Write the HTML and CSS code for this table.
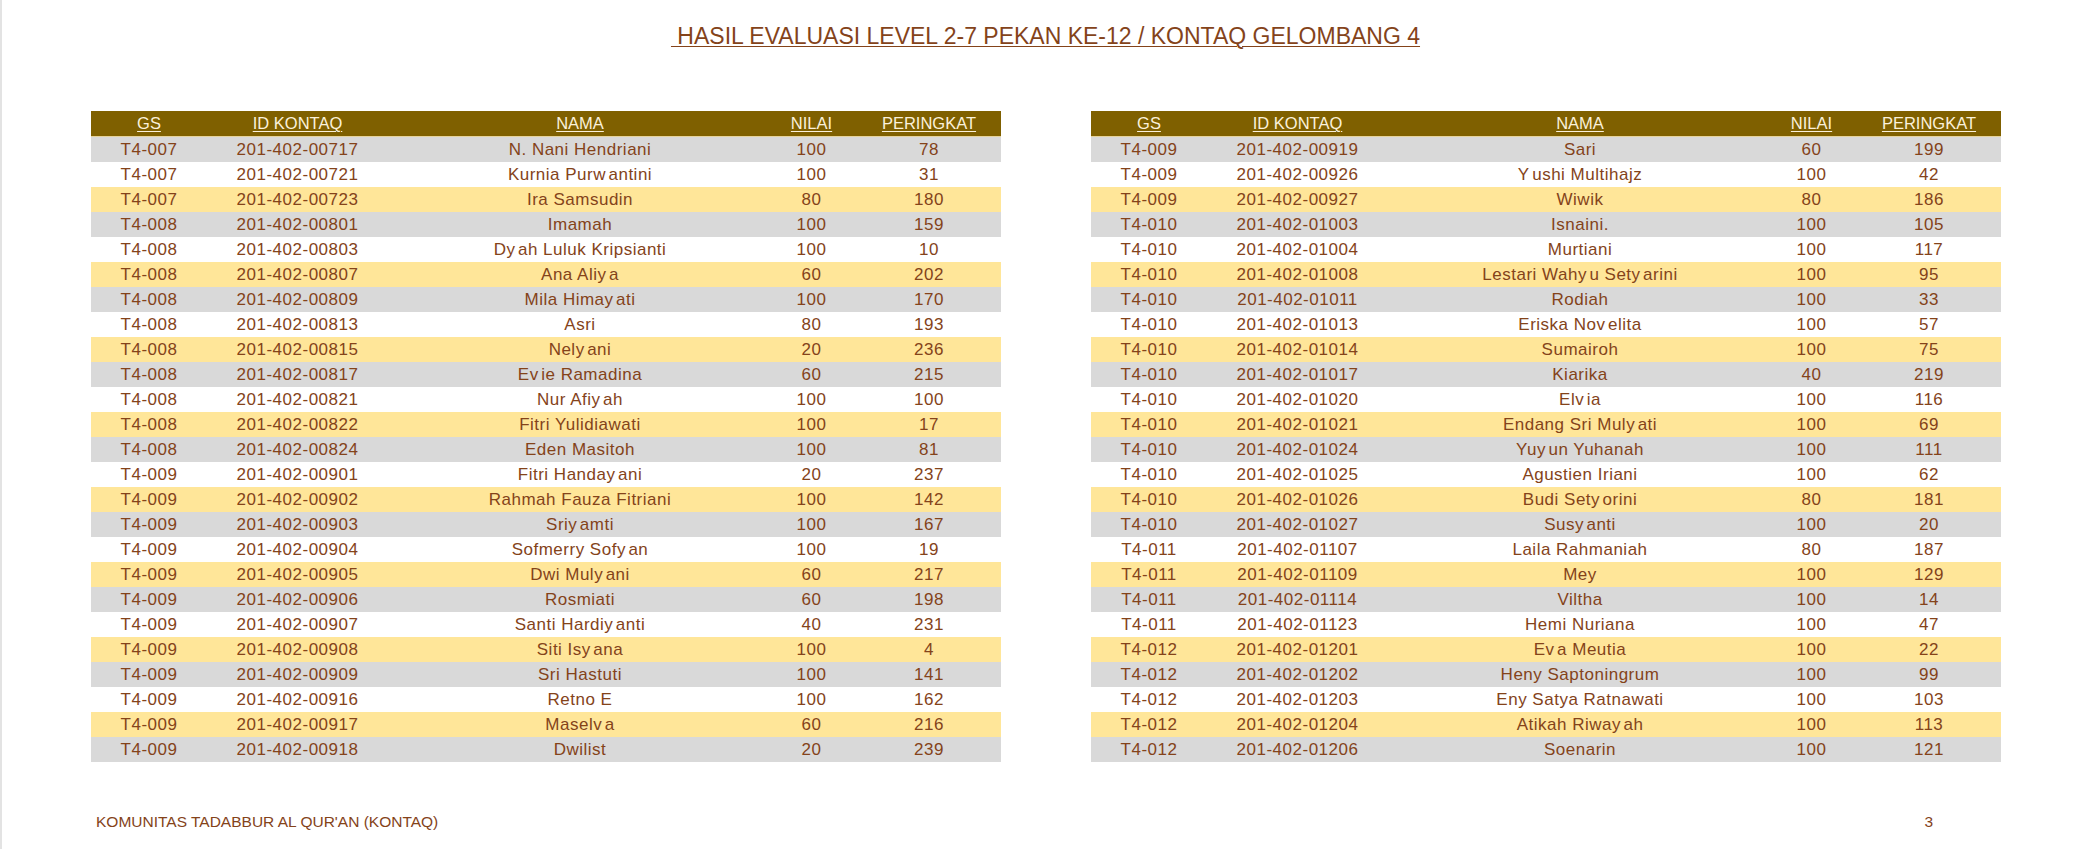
FILE: index.html
```html
<!DOCTYPE html>
<html lang="id">
<head>
<meta charset="utf-8">
<title>Hasil Evaluasi Level 2-7 Pekan ke-12</title>
<link rel="stylesheet" href="styles.css">
</head>
<body>
<h1 class="title">&nbsp;HASIL EVALUASI LEVEL 2-7 PEKAN KE-12 / KONTAQ GELOMBANG 4</h1>
<div class="tables">
  <table class="grid">
    <colgroup><col class="c-gs"><col class="c-id"><col class="c-nama"><col class="c-nilai"><col class="c-rank"></colgroup>
    <thead><tr><th>GS</th><th>ID KONTAQ</th><th>NAMA</th><th>NILAI</th><th class="rank">PERINGKAT</th></tr></thead>
    <tbody>
      <tr><td>T4-007</td><td>201-402-00717</td><td>N. Nani Hendriani</td><td>100</td><td class="rank">78</td></tr>
      <tr><td>T4-007</td><td>201-402-00721</td><td>Kurnia Pur<span class="g">w</span>antini</td><td>100</td><td class="rank">31</td></tr>
      <tr><td>T4-007</td><td>201-402-00723</td><td>Ira Samsudin</td><td>80</td><td class="rank">180</td></tr>
      <tr><td>T4-008</td><td>201-402-00801</td><td>Imamah</td><td>100</td><td class="rank">159</td></tr>
      <tr><td>T4-008</td><td>201-402-00803</td><td>D<span class="g">y</span>ah Luluk Kripsianti</td><td>100</td><td class="rank">10</td></tr>
      <tr><td>T4-008</td><td>201-402-00807</td><td>Ana Ali<span class="g">y</span>a</td><td>60</td><td class="rank">202</td></tr>
      <tr><td>T4-008</td><td>201-402-00809</td><td>Mila Hima<span class="g">y</span>ati</td><td>100</td><td class="rank">170</td></tr>
      <tr><td>T4-008</td><td>201-402-00813</td><td>Asri</td><td>80</td><td class="rank">193</td></tr>
      <tr><td>T4-008</td><td>201-402-00815</td><td>Nel<span class="g">y</span>ani</td><td>20</td><td class="rank">236</td></tr>
      <tr><td>T4-008</td><td>201-402-00817</td><td>E<span class="g">v</span>ie Ramadina</td><td>60</td><td class="rank">215</td></tr>
      <tr><td>T4-008</td><td>201-402-00821</td><td>Nur Afi<span class="g">y</span>ah</td><td>100</td><td class="rank">100</td></tr>
      <tr><td>T4-008</td><td>201-402-00822</td><td>Fitri Yulidiawati</td><td>100</td><td class="rank">17</td></tr>
      <tr><td>T4-008</td><td>201-402-00824</td><td>Eden Masitoh</td><td>100</td><td class="rank">81</td></tr>
      <tr><td>T4-009</td><td>201-402-00901</td><td>Fitri Handa<span class="g">y</span>ani</td><td>20</td><td class="rank">237</td></tr>
      <tr><td>T4-009</td><td>201-402-00902</td><td>Rahmah Fauza Fitriani</td><td>100</td><td class="rank">142</td></tr>
      <tr><td>T4-009</td><td>201-402-00903</td><td>Sri<span class="g">y</span>amti</td><td>100</td><td class="rank">167</td></tr>
      <tr><td>T4-009</td><td>201-402-00904</td><td>Sofmerry Sof<span class="g">y</span>an</td><td>100</td><td class="rank">19</td></tr>
      <tr><td>T4-009</td><td>201-402-00905</td><td>Dwi Mul<span class="g">y</span>ani</td><td>60</td><td class="rank">217</td></tr>
      <tr><td>T4-009</td><td>201-402-00906</td><td>Rosmiati</td><td>60</td><td class="rank">198</td></tr>
      <tr><td>T4-009</td><td>201-402-00907</td><td>Santi Hardi<span class="g">y</span>anti</td><td>40</td><td class="rank">231</td></tr>
      <tr><td>T4-009</td><td>201-402-00908</td><td>Siti Is<span class="g">y</span>ana</td><td>100</td><td class="rank">4</td></tr>
      <tr><td>T4-009</td><td>201-402-00909</td><td>Sri Hastuti</td><td>100</td><td class="rank">141</td></tr>
      <tr><td>T4-009</td><td>201-402-00916</td><td>Retno E</td><td>100</td><td class="rank">162</td></tr>
      <tr><td>T4-009</td><td>201-402-00917</td><td>Masel<span class="g">v</span>a</td><td>60</td><td class="rank">216</td></tr>
      <tr><td>T4-009</td><td>201-402-00918</td><td>Dwilist</td><td>20</td><td class="rank">239</td></tr>
    </tbody>
  </table>
  <table class="grid">
    <colgroup><col class="c-gs"><col class="c-id"><col class="c-nama"><col class="c-nilai"><col class="c-rank"></colgroup>
    <thead><tr><th>GS</th><th>ID KONTAQ</th><th>NAMA</th><th>NILAI</th><th class="rank">PERINGKAT</th></tr></thead>
    <tbody>
      <tr><td>T4-009</td><td>201-402-00919</td><td>Sari</td><td>60</td><td class="rank">199</td></tr>
      <tr><td>T4-009</td><td>201-402-00926</td><td><span class="g">Y</span>ushi Multihajz</td><td>100</td><td class="rank">42</td></tr>
      <tr><td>T4-009</td><td>201-402-00927</td><td>Wiwik</td><td>80</td><td class="rank">186</td></tr>
      <tr><td>T4-010</td><td>201-402-01003</td><td>Isnaini.</td><td>100</td><td class="rank">105</td></tr>
      <tr><td>T4-010</td><td>201-402-01004</td><td>Murtiani</td><td>100</td><td class="rank">117</td></tr>
      <tr><td>T4-010</td><td>201-402-01008</td><td>Lestari Wah<span class="g">y</span>u Set<span class="g">y</span>arini</td><td>100</td><td class="rank">95</td></tr>
      <tr><td>T4-010</td><td>201-402-01011</td><td>Rodiah</td><td>100</td><td class="rank">33</td></tr>
      <tr><td>T4-010</td><td>201-402-01013</td><td>Eriska No<span class="g">v</span>elita</td><td>100</td><td class="rank">57</td></tr>
      <tr><td>T4-010</td><td>201-402-01014</td><td>Sumairoh</td><td>100</td><td class="rank">75</td></tr>
      <tr><td>T4-010</td><td>201-402-01017</td><td>Kiarika</td><td>40</td><td class="rank">219</td></tr>
      <tr><td>T4-010</td><td>201-402-01020</td><td>El<span class="g">v</span>ia</td><td>100</td><td class="rank">116</td></tr>
      <tr><td>T4-010</td><td>201-402-01021</td><td>Endang Sri Mul<span class="g">y</span>ati</td><td>100</td><td class="rank">69</td></tr>
      <tr><td>T4-010</td><td>201-402-01024</td><td>Yu<span class="g">y</span>un Yuhanah</td><td>100</td><td class="rank">111</td></tr>
      <tr><td>T4-010</td><td>201-402-01025</td><td>Agustien Iriani</td><td>100</td><td class="rank">62</td></tr>
      <tr><td>T4-010</td><td>201-402-01026</td><td>Budi Set<span class="g">y</span>orini</td><td>80</td><td class="rank">181</td></tr>
      <tr><td>T4-010</td><td>201-402-01027</td><td>Sus<span class="g">y</span>anti</td><td>100</td><td class="rank">20</td></tr>
      <tr><td>T4-011</td><td>201-402-01107</td><td>Laila Rahmaniah</td><td>80</td><td class="rank">187</td></tr>
      <tr><td>T4-011</td><td>201-402-01109</td><td>Mey</td><td>100</td><td class="rank">129</td></tr>
      <tr><td>T4-011</td><td>201-402-01114</td><td>Viltha</td><td>100</td><td class="rank">14</td></tr>
      <tr><td>T4-011</td><td>201-402-01123</td><td>Hemi Nuriana</td><td>100</td><td class="rank">47</td></tr>
      <tr><td>T4-012</td><td>201-402-01201</td><td>E<span class="g">v</span>a Meutia</td><td>100</td><td class="rank">22</td></tr>
      <tr><td>T4-012</td><td>201-402-01202</td><td>Heny Saptoningrum</td><td>100</td><td class="rank">99</td></tr>
      <tr><td>T4-012</td><td>201-402-01203</td><td>Eny Satya Ratnawati</td><td>100</td><td class="rank">103</td></tr>
      <tr><td>T4-012</td><td>201-402-01204</td><td>Atikah Riwa<span class="g">y</span>ah</td><td>100</td><td class="rank">113</td></tr>
      <tr><td>T4-012</td><td>201-402-01206</td><td>Soenarin</td><td>100</td><td class="rank">121</td></tr>
    </tbody>
  </table>
</div>
<footer class="footer">
  <span class="org">KOMUNITAS TADABBUR AL QUR'AN (KONTAQ)</span>
  <span class="page-no">3</span>
</footer>
</body>
</html>
```

FILE: styles.css
```css
html, body {
  margin: 0;
  padding: 0;
}

body {
  width: 2079px;
  height: 849px;
  box-sizing: border-box;
  border-left: 2px solid #e3e3e3;
  background: #ffffff;
  color: #84431a;
  font-family: "Liberation Sans", Arial, sans-serif;
  overflow: hidden;
}

.title {
  margin: 0;
  padding: 22px 0 0 10px;
  font-size: 23px;
  line-height: 28px;
  font-weight: normal;
  text-align: center;
  text-decoration: underline;
  text-decoration-thickness: 1px;
  text-underline-offset: 2px;
  white-space: nowrap;
  color: #84431a;
}

.tables {
  display: flex;
  gap: 90px;
  padding-left: 89px;
  margin-top: 61px;
}

.grid {
  border-collapse: collapse;
  table-layout: fixed;
  width: 910px;
}

.c-gs { width: 116px; }
.c-id { width: 181px; }
.c-nama { width: 384px; }
.c-nilai { width: 79px; }
.c-rank { width: 150px; }

.grid th {
  height: 25px;
  padding: 0;
  background: #7f6000;
  color: #fbf1da;
  font-weight: normal;
  font-size: 16.5px;
  text-align: center;
  text-decoration: underline;
  text-decoration-thickness: 1px;
  text-underline-offset: 2px;
  border-bottom: 1px solid #e6d39b;
}

.grid td {
  height: 25px;
  padding: 0;
  text-align: center;
  font-size: 17px;
  letter-spacing: 0.5px;
  white-space: nowrap;
}

.grid .rank {
  padding-left: 6px;
}

.grid tbody tr:nth-child(3n+1) { background: #d9d9d9; }
.grid tbody tr:nth-child(3n+2) { background: #ffffff; }
.grid tbody tr:nth-child(3n) { background: #ffe699; }

.g {
  margin-right: 2.5px;
}

.footer {
  display: flex;
  justify-content: space-between;
  align-items: center;
  margin-top: 50px;
  padding: 0 146px 0 94px;
  font-size: 15.5px;
  line-height: 20px;
}
```
